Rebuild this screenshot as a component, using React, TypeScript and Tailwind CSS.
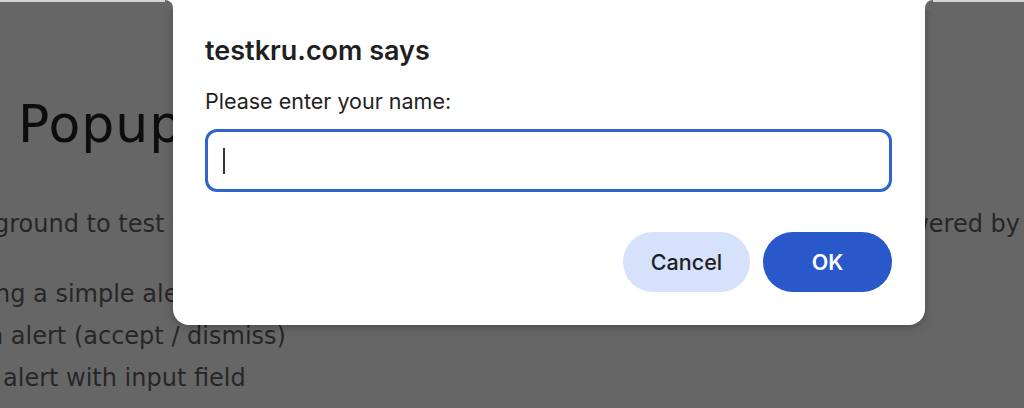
import React from 'react';

// [hidden prefix, visible part, shift of visible part]
const listItems: [string, string, string][] = [
  ['Handli', 'ng a simple alert', '-ml-[5px]'],
  ['Confirmatio', 'n alert (accept / dismiss)', '-ml-[12px]'],
  ['Prompt', 'alert with input field', 'ml-[3px]'],
];

const App: React.FC = () => {
  return (
    <div className="relative h-[408px] w-[1024px] overflow-hidden bg-[#666666] font-['DejaVu_Sans','Open_Sans',sans-serif]">
      {/* page behind the prompt */}
      <div className="pt-[94px]">
        <div className="flex whitespace-nowrap text-[52px] leading-[60px] text-[#0d0d0d]">
          <span className="flex w-0 justify-end">Alert</span>
          <h1 className="ml-[18px] tracking-[1px]">Popup</h1>
        </div>

        <div className="mt-[55px] flex w-[1024px] text-[24px] leading-[30px] text-[#262626]">
          <div className="flex min-w-0 flex-1 overflow-hidden whitespace-nowrap">
            <span className="flex w-0 justify-end">This is a play</span>
            <span className="-ml-[6px]">ground to test your skills with JavaScript alerts, po</span>
          </div>
          <span className="whitespace-nowrap pr-[4px]">wered by</span>
        </div>

        <ul className="mt-[34px] text-[24px] leading-[42px] text-[#262626]">
          {listItems.map(([hidden, shown, shift], i) => (
            <li key={i} className="flex whitespace-nowrap">
              <span className="flex w-0 justify-end">{hidden}</span>
              <span className={shift}>{shown}</span>
            </li>
          ))}
        </ul>
      </div>

      {/* browser edge */}
      <div className="absolute inset-x-0 top-0 h-[2px] bg-[#d4d4d4]" />

      {/* prompt dialog */}
      <div className="absolute left-[173px] top-0 w-[752px] rounded-b-[16px] bg-white pb-[33px] pl-[32px] pr-[33px] pt-[35px] font-['Inter',sans-serif] shadow-[0_2px_10px_rgba(0,0,0,0.25)]">
        <div className="absolute -left-[8px] top-0 h-[10px] w-[8px] bg-white">
          <div className="h-full w-full rounded-tr-[8px] bg-[#666666]" />
        </div>
        <div className="absolute -right-[8px] top-0 h-[10px] w-[8px] bg-white">
          <div className="h-full w-full rounded-tl-[8px] bg-[#666666]" />
        </div>

        <h2 className="text-[27px] font-semibold leading-[32px] text-[#1f1f1f]">testkru.com says</h2>
        <p className="mt-[20px] text-[21.5px] leading-[28px] text-[#1f1f1f]">Please enter your name:</p>

        <div className="mt-[14px] flex h-[63px] items-center rounded-[12px] border-[3px] border-[#3264cd] px-[15px]">
          <span className="h-[26px] w-[2px] bg-[#333333]" />
        </div>

        <div className="mt-[40px] flex justify-end gap-[13px]">
          <button className="h-[60px] w-[127px] rounded-full bg-[#d6e2fb] text-[21.5px] font-medium text-[#1f1f1f]">
            Cancel
          </button>
          <button className="h-[60px] w-[129px] rounded-full bg-[#2858c9] text-[21.5px] font-semibold text-white">
            OK
          </button>
        </div>
      </div>
    </div>
  );
};

export default App;
